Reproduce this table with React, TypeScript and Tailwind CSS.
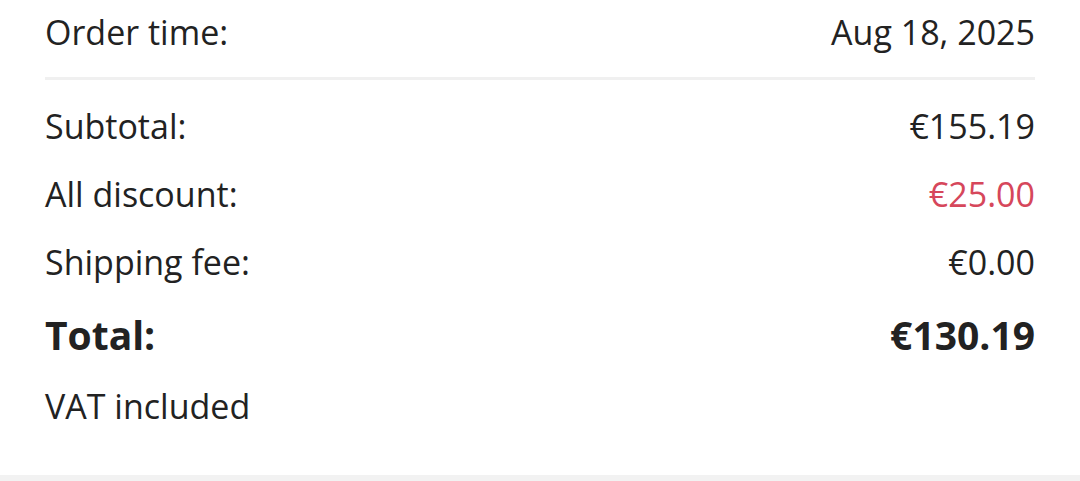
export default function App() {
  const font = { fontFamily: '"Open Sans", "Noto Sans", sans-serif' };
  return (
    <div className="w-[1080px] h-[481px] bg-white flex flex-col text-[#222222]" style={font}>
      <div className="px-[45px] pt-[8px] flex-1 flex flex-col">
        <div className="flex justify-between text-[34px] leading-[48px]">
          <span>Order time:</span>
          <span>Aug 18, 2025</span>
        </div>
        <div className="mt-[21px] h-[3px] bg-[#f0f0f0]" />
        <div className="mt-[22px] flex flex-col gap-[20px] text-[34px] leading-[48px]">
          <div className="flex justify-between">
            <span>Subtotal:</span>
            <span>€155.19</span>
          </div>
          <div className="flex justify-between">
            <span>All discount:</span>
            <span className="text-[#d6475b]">€25.00</span>
          </div>
          <div className="flex justify-between">
            <span>Shipping fee:</span>
            <span>€0.00</span>
          </div>
        </div>
        <div className="mt-[23px] flex justify-between text-[39px] leading-[52px] font-bold">
          <span>Total:</span>
          <span>€130.19</span>
        </div>
        <div className="mt-[21px] text-[34px] leading-[48px]">VAT included</div>
      </div>
      <div className="h-[6px] bg-[#f2f2f2]" />
    </div>
  );
}
